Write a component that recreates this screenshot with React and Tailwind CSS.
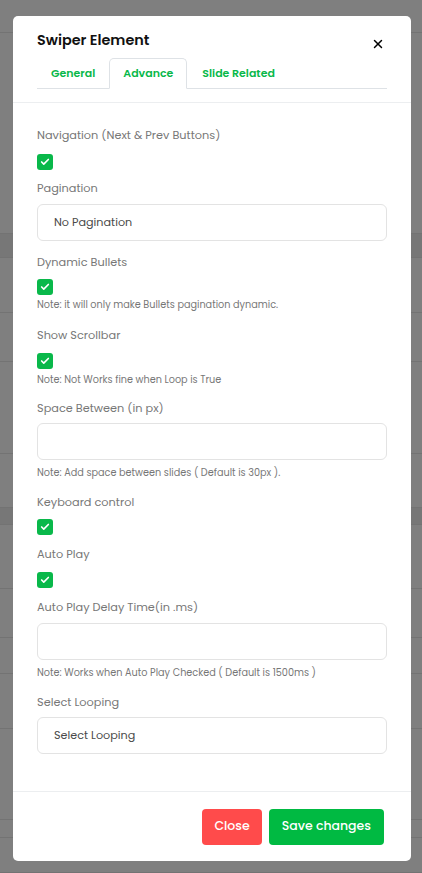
import React from "react";
import { Check, X } from "lucide-react";

const font = { fontFamily: "Poppins, Inter, 'Open Sans', sans-serif" };

function Checkbox() {
  return (
    <div className="w-4 h-4 rounded-[3px] bg-[#09b84a] flex items-center justify-center">
      <Check className="w-[10px] h-[10px] text-white" strokeWidth={4} />
    </div>
  );
}

function Label({ children }) {
  return <div className="text-[11.3px] leading-[20px] text-[#777]">{children}</div>;
}

function Note({ children }) {
  return <div className="text-[9.7px] leading-[14px] text-[#777]">{children}</div>;
}

function Field({ children }) {
  return (
    <div className="h-[37px] w-full rounded-[6px] border border-[#e3e3e3] bg-white px-4 flex items-center text-[11.2px] text-[#4a4a4a]">
      {children}
    </div>
  );
}

// faint rows of the page under the overlay
const bgRows = [33, 201, 24, 55, 49, 92, 54, 17, 64, 49, 36, 55, 91, 18, 35];

export default function App() {
  return (
    <div className="relative h-[873px] w-full overflow-hidden bg-[#7f7f7f]" style={font}>
      <div className="flex flex-col">
        {bgRows.map((h, i) => (
          <div
            key={i}
            className={`border-b border-[#737373] ${i === 2 || i === 7 ? "bg-[#777]" : ""}`}
            style={{ height: h }}
          />
        ))}
      </div>

      <div className="absolute left-[13px] top-[16px] w-[398px] h-[845px] bg-white rounded-[5px] flex flex-col">
        {/* header */}
        <div className="px-6 pt-[13px] border-b border-[#eceef0]">
          <div className="flex items-start justify-between">
            <h5 className="text-[14.4px] leading-[20px] font-semibold text-[#111] pt-[1px]">Swiper Element</h5>
            <button className="mt-[8px] mr-[2px] text-black">
              <X className="w-[14px] h-[14px]" strokeWidth={2.5} />
            </button>
          </div>
          <div className="mt-[7px] mb-[13px] flex border-b border-[#dee2e6] text-[11px] font-semibold text-[#09b84a]">
            <div className="h-[30px] px-[14px] flex items-center">General</div>
            <div className="h-[31px] -mb-px px-[13px] flex items-center bg-white border border-[#dee2e6] border-b-white rounded-t-[5px]">
              Advance
            </div>
            <div className="h-[30px] px-[15px] flex items-center">Slide Related</div>
          </div>
        </div>

        {/* body */}
        <div className="flex-1 px-6 pt-[22px] flex flex-col">
          <Label>Navigation (Next &amp; Prev Buttons)</Label>
          <div className="mt-[9px]"><Checkbox /></div>
          <div className="mt-[8px]"><Label>Pagination</Label></div>
          <div className="mt-[6px]"><Field>No Pagination</Field></div>

          <div className="mt-[11px]"><Label>Dynamic Bullets</Label></div>
          <div className="mt-[7px]"><Checkbox /></div>
          <div className="mt-[3px]"><Note>Note: it will only make Bullets pagination dynamic.</Note></div>

          <div className="mt-[13px]"><Label>Show Scrollbar</Label></div>
          <div className="mt-[8px]"><Checkbox /></div>
          <div className="mt-[4px]"><Note>Note: Not Works fine when Loop is True</Note></div>

          <div className="mt-[11px]"><Label>Space Between (in px)</Label></div>
          <div className="mt-[5px]"><Field /></div>
          <div className="mt-[6px]"><Note>Note: Add space between slides ( Default is 30px ).</Note></div>

          <div className="mt-[12px]"><Label>Keyboard control</Label></div>
          <div className="mt-[7px]"><Checkbox /></div>
          <div className="mt-[9px]"><Label>Auto Play</Label></div>
          <div className="mt-[8px]"><Checkbox /></div>
          <div className="mt-[9px]"><Label>Auto Play Delay Time(in .ms)</Label></div>
          <div className="mt-[6px]"><Field /></div>
          <div className="mt-[6px]"><Note>Note: Works when Auto Play Checked ( Default is 1500ms )</Note></div>

          <div className="mt-[12px]"><Label>Select Looping</Label></div>
          <div className="mt-[5px]"><Field>Select Looping</Field></div>
        </div>

        {/* footer */}
        <div className="h-[70px] border-t border-[#eceef0] px-[27px] flex items-center justify-end gap-[7px]">
          <button className="h-[36px] px-3 rounded-[4px] bg-[#ff4b4b] text-white text-[12.5px] font-medium">Close</button>
          <button className="h-[36px] px-[13px] rounded-[4px] bg-[#00ba42] text-white text-[12.5px] font-medium">Save changes</button>
        </div>
      </div>
    </div>
  );
}
